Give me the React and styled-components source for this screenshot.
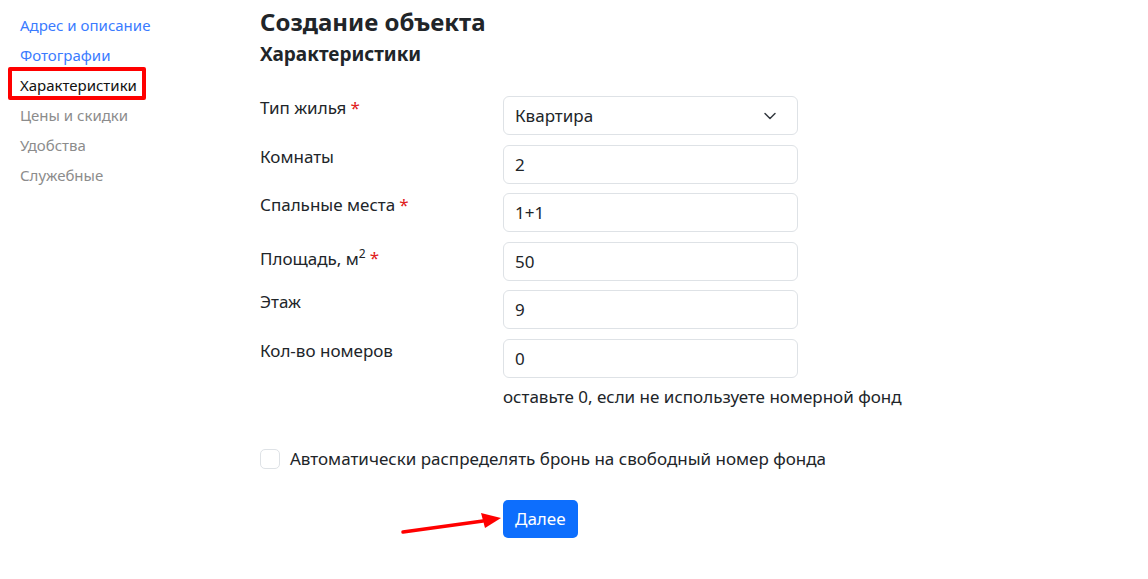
import React from 'react'
import styled, { createGlobalStyle } from 'styled-components'
import { ChevronDown } from 'lucide-react'

const GlobalStyle = createGlobalStyle`
    body {
        margin: 0;
        background: #fff;
        font-family: "Noto Sans", "Open Sans", sans-serif;
        color: #212529;
    }
`

const Page = styled.div`
    display: flex;
    width: 1148px;
    min-height: 579px;
`

const Sidebar = styled.nav`
    width: 260px;
    flex-shrink: 0;
    padding-top: 10px;
    display: flex;
    flex-direction: column;
    align-items: flex-start;
`

const NavItem = styled.a`
    position: relative;
    display: inline-block;
    margin-left: 20px;
    font-size: 15px;
    line-height: 30px;
    text-decoration: none;
    color: ${({ state }) => state === 'done' ? '#3a7bff' : state === 'active' ? '#111' : '#8c8c8c'};
    ${({ state }) => state === 'active' && `
        &::before {
            content: '';
            position: absolute;
            left: -12px;
            right: -9px;
            top: -3px;
            bottom: 0;
            border: 4px solid #ff0000;
            border-radius: 2px;
        }
    `}
`

const Main = styled.main`
    display: flex;
    flex-direction: column;
    padding-top: 6px;
`

const Title = styled.h1`
    font-size: 24px;
    font-weight: 700;
    line-height: 32px;
    margin: 0;
`

const Subtitle = styled.h2`
    font-size: 19px;
    font-weight: 700;
    line-height: 32px;
    margin: 0 0 26px;
`

const Form = styled.div`
    display: grid;
    grid-template-columns: 243px 295px;
    row-gap: 9.6px;
`

const Label = styled.div`
    font-size: 17px;
    line-height: 24px;
`

const Required = styled.span`
    color: #e02020;
    margin-left: 4px;
`

const Field = styled.div`
    box-sizing: border-box;
    height: 39px;
    display: flex;
    align-items: center;
    justify-content: space-between;
    padding: 0 17px 0 11px;
    border: 1px solid #dee2e6;
    border-radius: 6px;
    font-size: 17px;
    color: #212529;
    background: #fff;
`

const Hint = styled.div`
    grid-column: 2;
    margin-top: -3px;
    font-size: 17px;
    line-height: 24px;
    white-space: nowrap;
`

const CheckRow = styled.label`
    display: flex;
    align-items: center;
    gap: 10px;
    margin-top: 38px;
    font-size: 17px;
    line-height: 24px;
`

const Box = styled.span`
    box-sizing: border-box;
    width: 20px;
    height: 20px;
    border: 1px solid #dee2e6;
    border-radius: 5px;
`

const Actions = styled.div`
    display: grid;
    grid-template-columns: 243px auto;
    align-items: center;
    margin-top: 29px;
`

const Arrow = styled.svg`
    justify-self: end;
    margin-top: 12px;
`

const Button = styled.button`
    justify-self: start;
    height: 38px;
    padding: 0 12px;
    border: none;
    border-radius: 5px;
    background: #0d6efd;
    color: #fff;
    font-family: inherit;
    font-size: 17px;
`

const nav = [
    ['Адрес и описание', 'done'],
    ['Фотографии', 'done'],
    ['Характеристики', 'active'],
    ['Цены и скидки', 'todo'],
    ['Удобства', 'todo'],
    ['Служебные', 'todo'],
]

const fields = [
    { label: 'Тип жилья', value: 'Квартира', required: true, select: true },
    { label: 'Комнаты', value: '2' },
    { label: 'Спальные места', value: '1+1', required: true },
    { label: <>Площадь, м<sup style={{ fontSize: '12px' }}>2</sup></>, value: '50', required: true },
    { label: 'Этаж', value: '9' },
    { label: 'Кол-во номеров', value: '0' },
]

const App = () => (
    <Page>
        <GlobalStyle />
        <Sidebar>
            {nav.map(([text, state]) => (
                <NavItem key={text} state={state}>{text}</NavItem>
            ))}
        </Sidebar>
        <Main>
            <Title>Создание объекта</Title>
            <Subtitle>Характеристики</Subtitle>
            <Form>
                {fields.map((f, i) => (
                    <React.Fragment key={i}>
                        <Label>
                            {f.label}
                            {f.required && <Required>*</Required>}
                        </Label>
                        <Field>
                            {f.value}
                            {f.select && <ChevronDown size={20} strokeWidth={1.8} color="#343a40" />}
                        </Field>
                    </React.Fragment>
                ))}
                <Hint>оставьте 0, если не используете номерной фонд</Hint>
            </Form>
            <CheckRow>
                <Box />
                Автоматически распределять бронь на свободный номер фонда
            </CheckRow>
            <Actions>
                <Arrow width="102" height="24" viewBox="0 0 102 24">
                    <path d="M2 19 L82 8" stroke="#f00" strokeWidth="3.5" strokeLinecap="round" />
                    <path d="M100 5 L80 0 L84 15 Z" fill="#f00" />
                </Arrow>
                <Button>Далее</Button>
            </Actions>
        </Main>
    </Page>
)

export default App
